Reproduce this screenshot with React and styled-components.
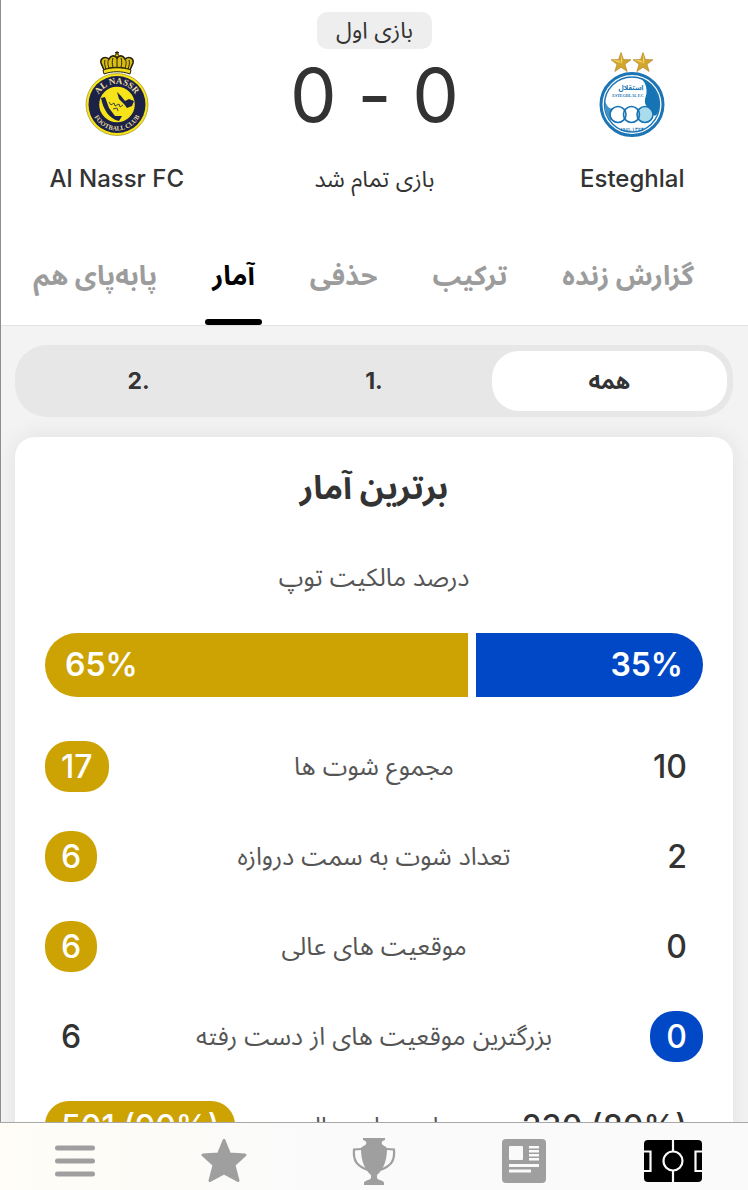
import { useState } from "react";
import styled, { createGlobalStyle } from "styled-components";

const colors = {
	text: "#333333",
	label: "#555555",
	muted: "#9c9c9c",
	gold: "#cda203",
	blue: "#0048c5",
	page: "#f3f3f3",
};

const GlobalStyle = createGlobalStyle`
	* {
		box-sizing: border-box;
	}
	body {
		margin: 0;
		color: ${colors.text};
		font-family: Inter, "Noto Sans Arabic", "DejaVu Sans", sans-serif;
	}
	button {
		font: inherit;
		color: inherit;
		border: 0;
		background: none;
		cursor: pointer;
	}
	h1, h2, p {
		margin: 0;
		padding: 0;
	}
`;

const tabs = ["گزارش زنده", "ترکیب", "حذفی", "آمار", "پابه‌پای هم"];
const periods = ["همه", "1.", "2."];
const possession = { home: 35, away: 65 };

const stats = [
	{ label: "مجموع شوت ها", home: "10", away: "17", best: "away" },
	{ label: "تعداد شوت به سمت دروازه", home: "2", away: "6", best: "away" },
	{ label: "موقعیت های عالی", home: "0", away: "6", best: "away" },
	{ label: "بزرگترین موقعیت های از دست رفته", home: "0", away: "6", best: "home" },
	{ label: "پاس های سالم", home: "230 (80%)", away: "501 (90%)", best: "away" },
];

const starPoints = (cx, cy, r) =>
	Array.from({ length: 10 }, (_, i) => {
		const radius = i % 2 ? r * 0.4 : r;
		const angle = (Math.PI / 5) * i - Math.PI / 2;
		return `${cx + radius * Math.cos(angle)},${cy + radius * Math.sin(angle)}`;
	}).join(" ");

const EsteghlalLogo = () => (
	<svg width="66" height="88" viewBox="0 0 66 88" direction="ltr" aria-hidden="true">
		<g fill="#d3a62c" stroke="#a87b1c" strokeWidth=".6">
			<polygon points={starPoints(22, 12, 10.5)} />
			<polygon points={starPoints(44, 12, 10.5)} />
		</g>
		<path d="M22 3l1.500 7-1.500 3zM44 3l1.500 7-1.500 3zM13 9l7 .5 2 2.500zM35 9l7 .5 2 2.500z" fill="#f3d568" />
		<circle cx="33" cy="53.500" r="31" fill="#fff" stroke="#1c75b5" strokeWidth="3" />
		<circle cx="33" cy="53.500" r="27.500" fill="#fff" stroke="#1c75b5" strokeWidth="1.400" />
		<path d="M41 27.200A27.500 27.500 0 0 1 59.500 60C57 66 55 66 53 62C50 56 45 56 46 48C49 41 48 31 41 27.200z" fill="#1673b4" />
		<path d="M6 50C9 58 12 58 14 57C11 61 12 66 12 70C8 66 5 58 6 50z" fill="#3f93c9" />
		<circle cx="46" cy="63.500" r="7.500" fill="#a9dced" />
		<g fill="none" stroke="#1673b4" strokeWidth="1.600">
			<circle cx="19" cy="63.500" r="8" />
			<circle cx="32.500" cy="63.500" r="8" />
			<circle cx="46" cy="63.500" r="8" />
		</g>
		<text x="32" y="39" fontSize="7" fontWeight="700" textAnchor="middle" fill="#1673b4">استقلال</text>
		<text x="29" y="46" fontSize="4" fontWeight="700" textAnchor="middle" fill="#1673b4" fontFamily="Liberation Serif">ESTEGHLAL F.C</text>
		<text x="33" y="79.500" fontSize="5" fontWeight="700" textAnchor="middle" fill="#1673b4" fontFamily="Liberation Serif">1945-۱۳۲۴</text>
	</svg>
);

const AlNassrLogo = () => (
	<svg width="64" height="88" viewBox="0 0 64 88" direction="ltr" aria-hidden="true">
		<path d="M19 19L16 12C15 7 20 5 24 8C26 4 30 4 32 7C34 4 38 4 40 8C44 5 49 7 48 12L45 19C37 16 27 16 19 19z" fill="#d9bd13" stroke="#29240d" strokeWidth="1.600" />
		<path d="M24 8c-2 3-1 6 0 9M32 7v9M40 8c2 3 1 6 0 9M28 7c-1 3-1 6 0 9M36 7c1 3 1 6 0 9M20 9c-1 3 0 6 1 9M44 9c1 3 0 6-1 9" fill="none" stroke="#29240d" strokeWidth="1" />
		<path d="M18 19C26 16 38 16 46 19L45 23C37 20 27 20 19 23z" fill="#f2dc1d" stroke="#29240d" />
		<circle cx="32" cy="4" r="1.800" fill="#e8cf16" stroke="#29240d" strokeWidth=".8" />
		<path d="M32 0v4M30 1.500h4" stroke="#29240d" />
		<circle cx="32" cy="53.500" r="31" fill="#f6e31a" stroke="#8d8420" strokeWidth=".6" />
		<circle cx="32" cy="53.500" r="28.500" fill="#1c2148" />
		<circle cx="32" cy="53.500" r="17.800" fill="#f6e31a" />
		<path d="M16 47L20 46L24 57L30 65L37 65L34 70C24 68 18 58 16 47z" fill="#1c2148" />
		<path d="M32 41L36 45L40 50L44 48L49 50L47 55L42 57L39 53L34 48z" fill="#1c2148" />
		<path d="M24 51l2 3 3-2 1 3 4-2 1 3 3-2M28 58l4-1 1 3" fill="none" stroke="#1c2148" strokeWidth=".8" />
		<path id="nassrTop" d="M11 54A21 21 0 0 1 53 54" fill="none" />
		<path id="nassrBottom" d="M6.500 54A25.500 25.500 0 0 0 57.500 54" fill="none" />
		<g fill="#e9dda0" fontFamily="Liberation Serif" fontWeight="700" textAnchor="middle">
			<text fontSize="9"><textPath href="#nassrTop" startOffset="50%">AL NASSR</textPath></text>
			<text fontSize="6.500"><textPath href="#nassrBottom" startOffset="50%">FOOTBALL CLUB</textPath></text>
		</g>
	</svg>
);

const PitchIcon = () => (
	<svg width="58" height="42" viewBox="0 0 58 42" aria-hidden="true">
		<rect width="58" height="42" rx="4" fill="#000" />
		<g fill="none" stroke="#fafafa" strokeWidth="2.200">
			<path d="M29 0v11M29 31v11M0 11.500h6.500v19.500H0M58 11.500h-6.500v19.500h6.500" />
			<circle cx="29" cy="21" r="9.500" />
		</g>
	</svg>
);

const NewsIcon = () => (
	<svg width="44" height="44" viewBox="0 0 44 44" aria-hidden="true">
		<rect width="44" height="44" rx="4" fill="currentColor" />
		<g fill="#fafafa">
			<rect x="7" y="7" width="14" height="14" rx="1" />
			<path d="M27 7h10v2.500H27zM27 11h10v2.500H27zM27 15h10v2.500H27zM27 19h10v2.500H27zM7 25h30v3H7zM7 30.500h22v3H7z" />
		</g>
	</svg>
);

const TrophyIcon = () => (
	<svg width="44" height="47" viewBox="0 0 44 47" aria-hidden="true">
		<path d="M11 0h22v2c-3 1-4 2-3 4c1 2 5 2 5 5c0 12-4 21-10 26v3c2 3 7 2 7 5v2H12v-2c0-3 5-2 7-5v-3C13 32 9 23 9 11c0-3 4-3 5-5c1-2 0-3-3-4z" fill="currentColor" />
		<path d="M10 11L2 11.500C1 23 5 28 16 32M34 11L42 11.500C43 23 39 28 28 32" fill="none" stroke="currentColor" strokeWidth="2.200" />
	</svg>
);

const StarIcon = () => (
	<svg width="46" height="46" viewBox="0 0 46 46" aria-hidden="true">
		<path d="M23 2.500L28.500 16L44 17L33 27L37 42.500L23 35L9 42.500L13 27L2 17L17.500 16z" fill="currentColor" stroke="currentColor" strokeWidth="3" strokeLinejoin="round" />
	</svg>
);

const MenuIcon = () => (
	<svg width="40" height="32" viewBox="0 0 40 32" aria-hidden="true">
		<path d="M2.500 3h35M2.500 16h35M2.500 29h35" stroke="currentColor" strokeWidth="5" strokeLinecap="round" />
	</svg>
);

const links = [
	{ name: "بازی ها", Icon: PitchIcon, active: true },
	{ name: "اخبار", Icon: NewsIcon },
	{ name: "مسابقات", Icon: TrophyIcon },
	{ name: "علاقه مندی ها", Icon: StarIcon },
	{ name: "منو", Icon: MenuIcon },
];

const Team = ({ name, children }) => (
	<TeamWrapper>
		{children}
		<TeamName>{name}</TeamName>
	</TeamWrapper>
);

const StatRow = ({ label, home, away, best }) => (
	<Row>
		<StatValue $fill={best === "home" && colors.blue}>{home}</StatValue>
		<StatLabel>{label}</StatLabel>
		<StatValue $end $fill={best === "away" && colors.gold}>{away}</StatValue>
	</Row>
);

const App = () => {
	const [tab, setTab] = useState("آمار");
	const [period, setPeriod] = useState("همه");

	return (
		<Page dir="rtl" lang="fa">
			<GlobalStyle />
			<Header>
				<Scoreboard>
					<Team name="Esteghlal">
						<EsteghlalLogo />
					</Team>
					<Result>
						<Leg>بازی اول</Leg>
						<Score>0 - 0</Score>
						<Status>بازی تمام شد</Status>
					</Result>
					<Team name="Al Nassr FC">
						<AlNassrLogo />
					</Team>
				</Scoreboard>
				<Tabs>
					{tabs.map((name) => (
						<Tab key={name} $active={name === tab} onClick={() => setTab(name)}>
							<span>{name}</span>
						</Tab>
					))}
				</Tabs>
			</Header>
			<Main>
				<Periods>
					{periods.map((name) => (
						<Period key={name} dir="ltr" $active={name === period} onClick={() => setPeriod(name)}>
							{name}
						</Period>
					))}
				</Periods>
				<Card>
					<CardTitle>برترین آمار</CardTitle>
					<PossessionLabel>درصد مالکیت توپ</PossessionLabel>
					<Possession style={{ gridTemplateColumns: `${possession.home}fr ${possession.away}fr` }}>
						<Share $color={colors.blue}>{possession.home}%</Share>
						<Share $color={colors.gold} $end>{possession.away}%</Share>
					</Possession>
					{stats.map((stat) => (
						<StatRow key={stat.label} {...stat} />
					))}
				</Card>
			</Main>
			<BottomNav>
				{links.map(({ name, Icon, active }) => (
					<NavLink key={name} href="#" aria-label={name} $active={active}>
						<Icon />
					</NavLink>
				))}
			</BottomNav>
		</Page>
	);
};

const Page = styled.div`
	display: flex;
	flex-direction: column;
	height: 100vh;
	background: ${colors.page};
	border-left: 1px solid #8e8e8e;
`;

const Header = styled.header`
	flex-shrink: 0;
	background: #fff;
	border-bottom: 1px solid #e2e2e2;
`;

const Scoreboard = styled.section`
	display: grid;
	grid-template-columns: 31% 1fr 31%;
	height: 224px;
`;

const TeamWrapper = styled.div`
	display: flex;
	flex-direction: column;
	align-items: center;
	gap: 24px;
	padding-top: 51px;
`;

const TeamName = styled.h2`
	font-size: 24px;
	font-weight: 500;
	line-height: 32px;
`;

const Result = styled.div`
	display: flex;
	flex-direction: column;
	align-items: center;
	padding-top: 12px;
`;

const Leg = styled.p`
	padding: 0 19px;
	border-radius: 10px;
	background: #eeeeee;
	font-size: 23px;
	line-height: 37px;
`;

const Score = styled.h1`
	font-size: 74px;
	font-weight: 400;
	line-height: 92px;
`;

const Status = styled.p`
	margin-top: 20px;
	font-size: 23px;
	line-height: 36px;
`;

const Tabs = styled.nav`
	display: flex;
	gap: 41px;
	height: 101px;
	padding-right: 47px;
	overflow: hidden;
`;

const Tab = styled.button`
	display: flex;
	flex-direction: column;
	flex-shrink: 0;
	padding: 0;
	font-size: 27px;
	font-weight: 700;
	white-space: nowrap;
	color: ${({ $active }) => ($active ? "#000" : colors.muted)};

	span {
		padding: 8px 7px 0;
		line-height: 87px;
	}
	&::after {
		content: "";
		width: 100%;
		height: 6px;
		border-radius: 3px;
		background: ${({ $active }) => ($active ? "#000" : "transparent")};
	}
`;

const Main = styled.main`
	flex: 1;
	min-height: 0;
	overflow: hidden;
	padding: 19px 15px 0 14px;
`;

const Periods = styled.div`
	display: grid;
	grid-template-columns: repeat(3, 1fr);
	height: 72px;
	padding: 6px;
	border-radius: 32px;
	background: #e7e7e7;
`;

const Period = styled.button`
	border-radius: 27px;
	background: ${({ $active }) => ($active ? "#fff" : "transparent")};
	font-size: 23px;
	font-weight: 700;
`;

const Card = styled.section`
	margin-top: 20px;
	padding: 28px 30px;
	border-radius: 20px;
	background: #fff;
	box-shadow: 0 0 24px rgba(0, 0, 0, 0.08);
`;

const CardTitle = styled.h2`
	font-size: 33px;
	font-weight: 700;
	line-height: 44px;
	text-align: center;
`;

const PossessionLabel = styled.p`
	margin-top: 50px;
	color: ${colors.label};
	font-size: 25px;
	line-height: 36px;
	text-align: center;
`;

const Possession = styled.div`
	display: grid;
	gap: 8px;
	height: 64px;
	margin: 38px 0 24px;
	border-radius: 32px;
	overflow: hidden;
`;

const Share = styled.div`
	padding: 0 20px;
	background: ${({ $color }) => $color};
	color: #fff;
	font-size: 32px;
	font-weight: 600;
	line-height: 64px;
	text-align: ${({ $end }) => ($end ? "end" : "start")};
`;

const Row = styled.div`
	display: grid;
	grid-template-columns: 1fr auto 1fr;
	align-items: center;
	height: 90px;
`;

const StatValue = styled.span`
	direction: ltr;
	justify-self: ${({ $end }) => ($end ? "left" : "right")};
	padding: 0 16px;
	border-radius: 24px;
	background: ${({ $fill }) => $fill || "transparent"};
	color: ${({ $fill }) => ($fill ? "#fff" : colors.text)};
	font-size: 32px;
	font-weight: 500;
	line-height: 51px;
`;

const StatLabel = styled.span`
	color: ${colors.label};
	font-size: 25px;
	line-height: 36px;
`;

const BottomNav = styled.nav`
	display: grid;
	grid-template-columns: repeat(5, 1fr);
	flex-shrink: 0;
	height: 68px;
	margin-left: -1px;
	border-top: 1px solid #a8a8a8;
	background: linear-gradient(to left, #fafafa 60%, #fffdf6);
`;

const NavLink = styled.a`
	display: flex;
	align-items: center;
	justify-content: center;
	padding-top: 9px;
	color: ${({ $active }) => ($active ? "#000" : "#9f9f9f")};
`;

export default App;
